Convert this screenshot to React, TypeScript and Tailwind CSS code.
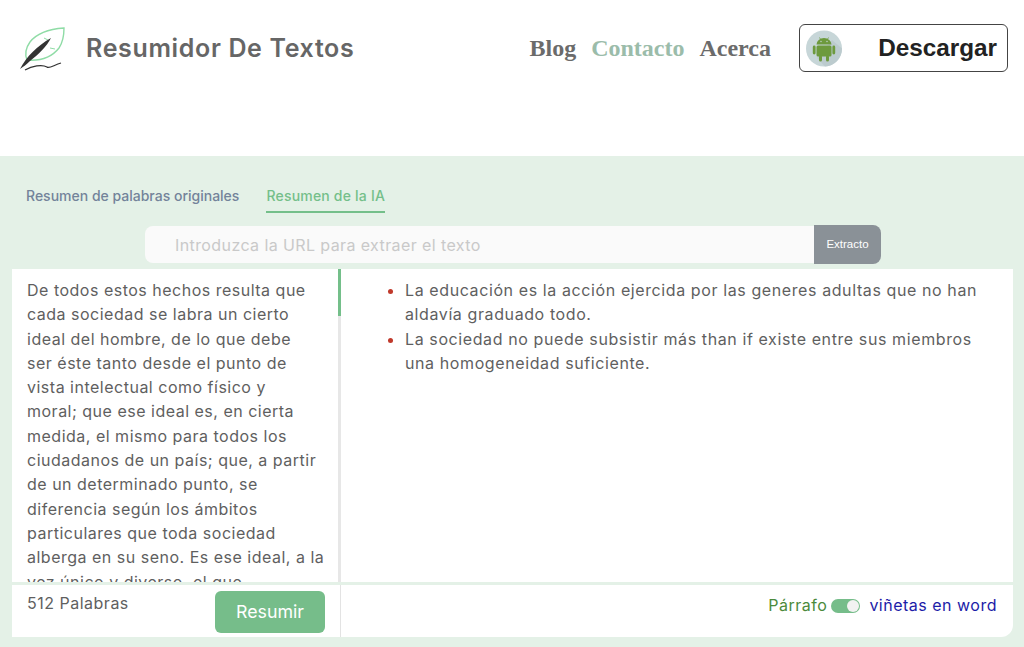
import { useState } from 'react';

const sourceLines = [
  'De todos estos hechos resulta que',
  'cada sociedad se labra un cierto',
  'ideal del hombre, de lo que debe',
  'ser éste tanto desde el punto de',
  'vista intelectual como físico y',
  'moral; que ese ideal es, en cierta',
  'medida, el mismo para todos los',
  'ciudadanos de un país; que, a partir',
  'de un determinado punto, se',
  'diferencia según los ámbitos',
  'particulares que toda sociedad',
  'alberga en su seno. Es ese ideal, a la',
  'vez único y diverso, el que',
];

function Logo() {
  return (
    <svg width="46" height="46" viewBox="0 0 46 46" className="shrink-0">
      <path d="M44 1C30 2 17 6 10 15 5 22 5 28 7 33 20 34 32 30 39 21 43 15 44 8 44 1Z" fill="none" stroke="#8fdca6" strokeWidth="1.4" />
      <path d="M24 11l4 2M30 21l5 1" stroke="#8fdca6" strokeWidth="1" />
      <path d="M0 42C7 29 17 19 31 11 27 19 18 28 10 34 7 37 3 40 0 42Z" fill="#333333" />
      <path d="M5 43C12 39 22 37 27 40 29 42 34 38 41 36" fill="none" stroke="#333333" strokeWidth="1.3" />
    </svg>
  );
}

function AndroidBadge() {
  return (
    <svg width="36" height="37" viewBox="0 0 36 37" className="shrink-0">
      <circle cx="18" cy="18.5" r="18" fill="#c7d6d8" />
      <path d="M11 28L19 36.5A18 18 0 0 0 36 18.5L26 10Z" fill="#bccbce" />
      <path d="M13.5 7.5l1.8 3M22.5 7.5l-1.8 3" stroke="#6d9a3d" strokeWidth="0.8" />
      <g fill="#6d9a3d">
        <path d="M10.5 14.5a7.5 6.5 0 0 1 15 0Z" />
        <rect x="10.5" y="15.5" width="15" height="11" rx="1.5" />
        <rect x="6.8" y="15.5" width="2.8" height="9" rx="1.4" />
        <rect x="26.4" y="15.5" width="2.8" height="9" rx="1.4" />
        <rect x="13" y="25" width="3" height="6.5" rx="1.5" />
        <rect x="20" y="25" width="3" height="6.5" rx="1.5" />
      </g>
      <circle cx="15" cy="11.5" r="0.7" fill="#c7d6d8" />
      <circle cx="21" cy="11.5" r="0.7" fill="#c7d6d8" />
    </svg>
  );
}

export default function App() {
  const [bullets, setBullets] = useState(true);

  return (
    <main className="min-h-[647px] bg-[#e4f1e7] font-['Inter',sans-serif]">
      <header className="flex h-[156px] items-start bg-white pl-5 pr-[16px] pt-6">
        <div className="mt-[3px]">
          <Logo />
        </div>
        <h1 className="ml-[20px] mt-[3px] text-[25px] font-semibold leading-[42px] tracking-[0.65px] text-[#666666]">Resumidor De Textos</h1>
        <nav className="ml-auto mt-[4px] flex gap-[15px] font-['Liberation_Serif',serif] text-[24px] font-bold leading-[40px] text-[#6b6b6b]">
          <a>Blog</a>
          <a className="text-[#9bbcaa]">Contacto</a>
          <a>Acerca</a>
        </nav>
        <button className="ml-[28px] flex h-[48px] w-[209px] items-center justify-between rounded-md border border-[#444444] pl-[6px] pr-[10px] font-['Liberation_Sans',sans-serif] text-[24.3px] font-bold text-[#222222]">
          <AndroidBadge />
          <span>Descargar</span>
        </button>
      </header>

      <div className="flex items-start gap-[27px] pl-[26px] pt-[30px] text-sm font-medium leading-5">
        <button className="flex h-[27px] items-start text-[#73839a]">Resumen de palabras originales</button>
        <button className="flex h-[27px] w-[119px] items-start border-b-2 border-[#74bf8a] tracking-[0.2px] text-[#74bf8a]">
          Resumen de la IA
        </button>
      </div>

      <div className="mt-[12px] flex h-[39px] items-center pl-[145px]">
        <div className="flex h-[37px] w-[669px] items-center rounded-l-lg bg-[#fafafa] pl-[30px] text-[16px] tracking-[0.4px] text-[#c9c9c9]">
          Introduzca la URL para extraer el texto
        </div>
        <button className="h-[39px] w-[67px] rounded-r-lg bg-[#8a9197] font-['Liberation_Sans',sans-serif] text-[11.5px] text-white">
          Extracto
        </button>
      </div>

      <section className="ml-3 mt-[5px] h-[368px] w-[1001px] overflow-hidden rounded-br-xl bg-white text-[16px] tracking-[0.5px] text-[#5f5f5f]">
        <div className="flex h-[313px]">
          <div className="h-full w-[326px] overflow-hidden pl-[15px] pt-[9px] leading-[24.3px]">
            {sourceLines.map((line) => (
              <div key={line} className="whitespace-nowrap">{line}</div>
            ))}
          </div>
          <div className="h-full w-[3px] bg-[#e7e7e7]">
            <div className="h-[47px] w-[3px] bg-[#74bf8a]" />
          </div>
          <ul className="flex-1 list-disc pl-[64px] pt-[9px] leading-[24.3px] tracking-[0.6px] marker:text-[#c0392b]">
            <li className="whitespace-nowrap">
              La educación es la acción ejercida por las generes adultas que no han
              <br />
              aldavía graduado todo.
            </li>
            <li className="whitespace-nowrap">
              La sociedad no puede subsistir más than if existe entre sus miembros
              <br />
              una homogeneidad suficiente.
            </li>
          </ul>
        </div>
        <div className="h-[3px] bg-[#e4f1e7]" />
        <div className="flex h-[52px]">
          <div className="flex w-[329px] items-start justify-between border-r border-[#e3e3e3] pl-[15px] pr-[15px] pt-[6px]">
            <span className="leading-6">512 Palabras</span>
            <button className="h-[42px] w-[110px] rounded-md bg-[#76bd8a] text-[17.8px] tracking-normal text-white">Resumir</button>
          </div>
          <div className="flex flex-1 items-start justify-end gap-[4px] pr-4 pt-[8px] leading-6">
            <span className="text-[#4b8a3c]">Párrafo</span>
            <button
              onClick={() => setBullets(!bullets)}
              className="mt-[6px] flex h-[14px] w-[29px] items-center justify-end rounded-full bg-[#76bd8a] pr-[1px]"
            >
              <span className="h-[12px] w-[12px] rounded-full bg-[#f2f2f2]" />
            </button>
            <span className="ml-[5px] text-[#1c1ca8]">viñetas en word</span>
          </div>
        </div>
      </section>
    </main>
  );
}
